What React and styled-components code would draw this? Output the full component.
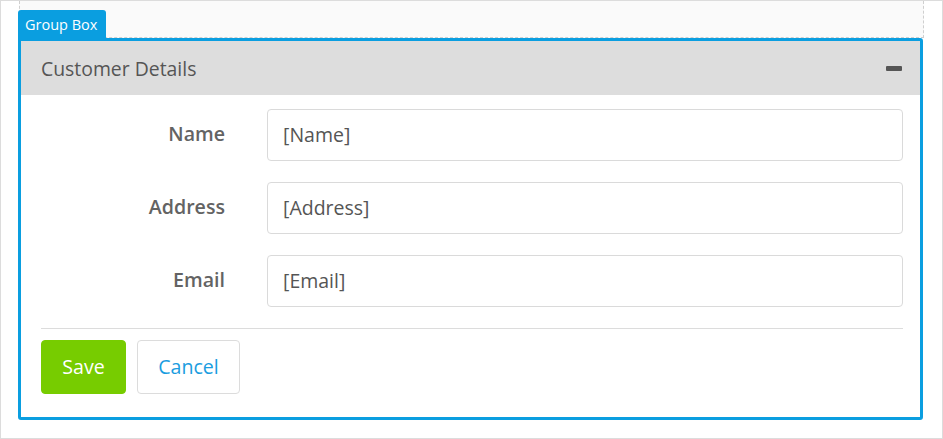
import React from "react";
import styled, { createGlobalStyle } from "styled-components";

const Global = createGlobalStyle`
  html, body { margin: 0; padding: 0; background: #fff; }
  body { font-family: "Open Sans", "Noto Sans", sans-serif; }
  * { box-sizing: border-box; }
`;

const BLUE = "#0a9ee0";

const Page = styled.div`
  width: 943px;
  height: 439px;
  border: 1px solid #dcdcdc;
  background: #fff;
  padding-left: 17px;
  overflow: hidden;
`;

const DropZone = styled.div`
  margin-left: 1px;
  width: 905px;
  height: 37px;
  background: #fafafa;
  border: 1px dashed #cfcfcf;
  border-top: none;
`;

const GroupWrap = styled.div`
  position: relative;
  width: 905px;
`;

const Tab = styled.div`
  position: absolute;
  left: 0;
  top: -28px;
  height: 28px;
  width: 88px;
  padding-left: 7px;
  display: flex;
  align-items: center;
  background: ${BLUE};
  color: #fff;
  font-size: 14.5px;
  border-radius: 3px 3px 0 0;
`;

const Box = styled.div`
  height: 382px;
  border: 3px solid ${BLUE};
  border-radius: 0 3px 3px 3px;
  display: flex;
  flex-direction: column;
`;

const Header = styled.div`
  height: 54px;
  background: #dddddd;
  display: flex;
  align-items: center;
  justify-content: space-between;
  padding: 0 18px 0 20px;
  color: #555;
  font-size: 19.4px;
`;

const Minus = styled.span`
  width: 16px;
  height: 5px;
  background: #555;
  border-radius: 1px;
`;

const Body = styled.div`
  padding: 14px 17px 0 20px;
`;

const Row = styled.div`
  display: grid;
  grid-template-columns: 184px 636px;
  column-gap: 42px;
  align-items: center;
  margin-bottom: ${(p) => (p.$last ? 0 : 21)}px;
`;

const Label = styled.label`
  text-align: right;
  font-weight: 600;
  font-size: 19.6px;
  color: #636363;
  padding-bottom: 3px;
`;

const Input = styled.div`
  height: 52px;
  border: 1px solid #dadada;
  border-radius: 4px;
  display: flex;
  align-items: center;
  padding: 0 0 2px 15px;
  font-size: 19.5px;
  color: #555;
`;

const Separator = styled.hr`
  border: none;
  border-top: 1px solid #dcdcdc;
  margin: 21px 0 11px;
`;

const Actions = styled.div`
  display: flex;
  gap: 11px;
`;

const Button = styled.button`
  height: 54px;
  width: ${(p) => p.$w}px;
  border-radius: 4px;
  font-family: inherit;
  font-size: 19.6px;
  padding: 0 0 2px;
  cursor: pointer;
  background: ${(p) => (p.$primary ? "#77cc00" : "#fff")};
  color: ${(p) => (p.$primary ? "#fff" : "#1a9de0")};
  border: 1px solid ${(p) => (p.$primary ? "#77cc00" : "#dcdcdc")};
`;

const fields = [
  ["Name", "[Name]"],
  ["Address", "[Address]"],
  ["Email", "[Email]"],
];

export default function App() {
  return (
    <>
      <Global />
      <Page>
        <DropZone />
        <GroupWrap>
          <Tab>Group Box</Tab>
          <Box>
            <Header>
              <span>Customer Details</span>
              <Minus />
            </Header>
            <Body>
              {fields.map(([l, v], i) => (
                <Row key={l} $last={i === fields.length - 1}>
                  <Label>{l}</Label>
                  <Input>{v}</Input>
                </Row>
              ))}
              <Separator />
              <Actions>
                <Button $primary $w={85}>Save</Button>
                <Button $w={103}>Cancel</Button>
              </Actions>
            </Body>
          </Box>
        </GroupWrap>
      </Page>
    </>
  );
}
